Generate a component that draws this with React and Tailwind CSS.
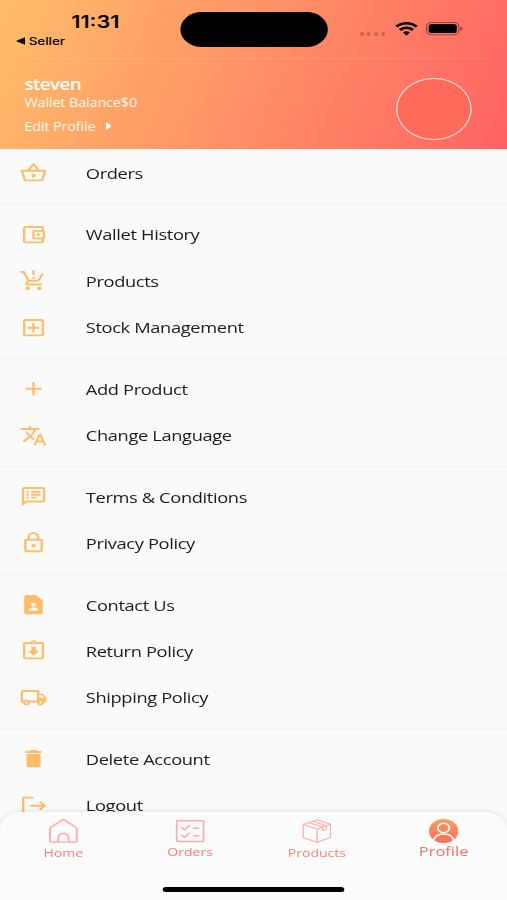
import {
  MdOutlineShoppingBasket,
  MdOutlineAccountBalanceWallet,
  MdProductionQuantityLimits,
  MdOutlineAddBox,
  MdAdd,
  MdTranslate,
  MdOutlineSpeakerNotes,
  MdLockOutline,
  MdContactPage,
  MdOutlineAssignmentReturned,
  MdOutlineLocalShipping,
  MdDelete,
} from 'react-icons/md'

function LogoutIcon({ className }) {
  return (
    <svg className={className} viewBox="0 0 24 24" fill="none" stroke="currentColor" strokeWidth="2">
      <path d="M12 3.6H3.2V20.5H12M9 12H21.5M17.4 7.8L21.6 12L17.4 16.2" />
    </svg>
  )
}

const GROUPS = [
  [{ label: 'Orders', Icon: MdOutlineShoppingBasket }],
  [
    { label: 'Wallet History', Icon: MdOutlineAccountBalanceWallet },
    { label: 'Products', Icon: MdProductionQuantityLimits },
    { label: 'Stock Management', Icon: MdOutlineAddBox },
  ],
  [
    { label: 'Add Product', Icon: MdAdd },
    { label: 'Change Language', Icon: MdTranslate },
  ],
  [
    { label: 'Terms & Conditions', Icon: MdOutlineSpeakerNotes },
    { label: 'Privacy Policy', Icon: MdLockOutline },
  ],
  [
    { label: 'Contact Us', Icon: MdContactPage },
    { label: 'Return Policy', Icon: MdOutlineAssignmentReturned },
    { label: 'Shipping Policy', Icon: MdOutlineLocalShipping },
  ],
  [
    { label: 'Delete Account', Icon: MdDelete },
    { label: 'Logout', Icon: LogoutIcon },
  ],
]

function HomeIcon() {
  return (
    <svg className="h-6 w-6" viewBox="0 0 24 24" fill="none" stroke="#ffb0ad" strokeWidth="1.6" strokeLinejoin="round">
      <path d="M1 10.2Q1 9 1.8 8.4L10.6 1.4Q12 .3 13.4 1.4L22.2 8.4Q23 9 23 10.2V21.4Q23 23 21.4 23H17.4Q16.2 23 16.2 21.8V18.6A4.2 4.2 0 0 0 7.8 18.6V21.8Q7.8 23 6.6 23H2.6Q1 23 1 21.4Z" />
      <path d="M7 23H17" />
    </svg>
  )
}

function OrdersIcon() {
  return (
    <svg className="h-6 w-6" viewBox="0 0 24 24" fill="none" stroke="#ffaaa7" strokeWidth="1.5" strokeLinejoin="round" strokeLinecap="round">
      <rect x=".9" y="1.8" width="22.2" height="20.6" rx="1" />
      <path d="M5 8.6L7.4 10.8L11.4 6.6M5 16.2L7.4 18.4L11.4 14.2M15 9.2H19M15 16.8H19" />
    </svg>
  )
}

function ProductsIcon() {
  return (
    <svg className="h-6 w-6" viewBox="0 0 24 24" fill="none" stroke="#ffaeab" strokeWidth="1.1" strokeLinejoin="round">
      <path d="M.8 5.4L12.4 .7L23.2 5.2V18.6L12.2 23.3L.8 18.8ZM.8 5.4L12.2 10L23.2 5.2M12.2 10V23.3" />
      <path d="M5.4 3.6L16.6 8.2V11.6L19.8 10.2V6.8L9 2.2" />
    </svg>
  )
}

function ProfileIcon() {
  return (
    <svg className="h-6 w-6" viewBox="0 0 24 24">
      <defs>
        <linearGradient id="profileFill" x1="0" y1="0" x2="0" y2="1">
          <stop offset="0" stopColor="#ff9a5f" />
          <stop offset="1" stopColor="#fb6d5d" />
        </linearGradient>
      </defs>
      <circle cx="12" cy="12" r="12" fill="url(#profileFill)" />
      <g fill="none" stroke="#fff" strokeWidth="1.5">
        <circle cx="12" cy="9" r="4.7" />
        <path d="M3.9 20.6C5 17 8 14.9 12 14.9S19 17 20.1 20.6" />
      </g>
    </svg>
  )
}

const TABS = [
  { label: 'Home', Icon: HomeIcon, text: 'mt-px text-[11.5px] text-[#f98078]' },
  { label: 'Orders', Icon: OrdersIcon, text: 'text-[11.5px] text-[#f97c72]' },
  { label: 'Products', Icon: ProductsIcon, text: 'mt-px text-[11.5px] text-[#f98078]' },
  { label: 'Profile', Icon: ProfileIcon, text: '-mt-px text-[13.5px] text-[#f77068]' },
]

function StatusBar() {
  return (
    <div className="flex h-[57.5px] font-['Inter','Liberation_Sans',sans-serif] text-black">
      <div className="w-[148px] pt-[13px]">
        <div className="pl-[58.5px] text-[17.8px] font-semibold leading-[18px]">11:31</div>
        <div className="flex items-center gap-[3px] pl-[13px] pt-[4px] text-[11px] font-medium leading-[12px]">
          <svg className="h-[8px] w-[7.5px]" viewBox="0 0 8 8"><path d="M8 0V8L0 4Z" /></svg>
          Seller
        </div>
      </div>
      <div className="mt-[12px] h-[35px] w-[121px] rounded-full bg-black" />
      <div className="flex flex-1 items-start pl-[26px] pt-[21px]">
        <div className="mt-[11px] flex gap-[2.4px]">
          {[0, 1, 2, 3].map(i => (
            <div key={i} className="h-[3.5px] w-[3.5px] rounded-full bg-black/20" />
          ))}
        </div>
        <svg className="ml-[7.5px] h-[15px] w-[19px]" viewBox="0 0 19 15" fill="none" stroke="#000" strokeWidth="2.6">
          <path d="M1.2 5.6A11.8 11.8 0 0 1 17.8 5.6M4.2 9A7.4 7.4 0 0 1 14.8 9" />
          <path d="M9.5 14.4L6.6 11.6A4 4 0 0 1 12.4 11.6Z" fill="#000" stroke="none" />
        </svg>
        <svg className="ml-[6.5px] h-[15px] w-[31px]" viewBox="0 0 31 14">
          <rect x="1" y=".9" width="26.5" height="12.4" rx="4" fill="none" stroke="#000" strokeOpacity=".4" />
          <rect x="2.7" y="2.6" width="23.1" height="9" rx="2.6" />
          <path d="M28.8 5V9.4Q30.3 8.6 30.3 7.2T28.8 5Z" fillOpacity=".5" />
        </svg>
      </div>
    </div>
  )
}

function Header() {
  return (
    <header className="h-[149.4px] shrink-0 bg-[linear-gradient(109.8deg,#ffbd69,#ff6363)]">
      <StatusBar />
      <div className="ml-[26px] mr-[18px] h-px bg-white/10" />
      <div className="flex justify-between pl-[20px] pr-[29.5px] text-white">
        <div className="pt-[16px]">
          <div className="text-[15.5px] font-semibold leading-[18px] tracking-[-0.5px]">steven</div>
          <div className="-mt-px text-[11.8px] leading-[20px] tracking-[-0.1px] text-white/90">Wallet Balance$0</div>
          <div className="flex items-center pt-[5.4px] text-[11.8px] leading-[18px] tracking-[-0.1px] text-white/90">
            Edit Profile
            <svg className="ml-[8.5px] h-[8px] w-[4.5px]" viewBox="0 0 4 8" preserveAspectRatio="none"><path d="M0 0L4 4L0 8Z" fill="#fff" /></svg>
          </div>
        </div>
        <div className="mt-[19.5px] h-[62px] w-[62px] rounded-full border border-white/80 bg-[#ff6b58]" />
      </div>
    </header>
  )
}

export default function App() {
  return (
    <div className="h-[900px] w-[507px] overflow-hidden bg-[#fafafa]">
      {/* 416px wide screen stretched to the full window width */}
      <div className="flex h-[900px] w-[416px] origin-top-left scale-x-[1.21875] flex-col font-['Open_Sans','Noto_Sans',sans-serif]">
        <Header />

        <main className="min-h-0 flex-1 overflow-hidden pt-[0.4px]">
          {GROUPS.map((items, g) => (
            <div key={g}>
              {g > 0 && (
                <div className="flex h-[15.4px] items-center">
                  <div className="h-px w-full bg-[#f3f3f3]" />
                </div>
              )}
              {items.map(({ label, Icon }) => (
                <div key={label} className="flex h-[46.3px] items-center">
                  <Icon className="ml-[16.4px] mr-[31px] h-[23.4px] w-[23px] shrink-0 text-[#ffbd69]" />
                  <span className="whitespace-nowrap text-[15px] tracking-[-0.3px] text-[#1c1c1c]">{label}</span>
                </div>
              ))}
            </div>
          ))}
        </main>

        <nav className="relative flex h-[88px] shrink-0 rounded-t-[18px] bg-[#fbfbfb] pt-[7px] shadow-[0_0_6px_rgba(0,0,0,0.12)]">
          {TABS.map(({ label, Icon, text }) => (
            <div key={label} className="flex flex-1 flex-col items-center">
              <Icon />
              <span className={`leading-[18px] ${text}`}>{label}</span>
            </div>
          ))}
          <div className="absolute bottom-[8px] left-1/2 h-[5px] w-[149px] -translate-x-1/2 rounded-full bg-black" />
        </nav>
      </div>
    </div>
  )
}
